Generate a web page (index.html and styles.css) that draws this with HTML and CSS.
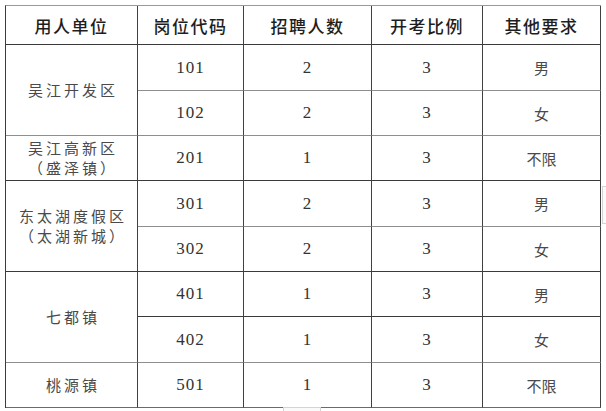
FILE: index.html
```html
<!DOCTYPE html>
<html lang="zh">
<head>
<meta charset="utf-8">
<link rel="stylesheet" href="styles.css">
</head>
<body>
<div class="page">
  <div class="grid">
    <div class="c h">用人单位</div>
    <div class="c h">岗位代码</div>
    <div class="c h">招聘人数</div>
    <div class="c h">开考比例</div>
    <div class="c h">其他要求</div>

    <div class="c unit span2 lt">吴江开发区</div>
    <div class="c num lt">101</div>
    <div class="c num lt">2</div>
    <div class="c num lt">3</div>
    <div class="c txt lt">男</div>
    <div class="c num lt">102</div>
    <div class="c num lt">2</div>
    <div class="c num lt">3</div>
    <div class="c txt lt">女</div>

    <div class="c unit two">吴江高新区<br>（盛泽镇）</div>
    <div class="c num">201</div>
    <div class="c num">1</div>
    <div class="c num">3</div>
    <div class="c txt">不限</div>

    <div class="c unit two span2">东太湖度假区<br>（太湖新城）</div>
    <div class="c num lt">301</div>
    <div class="c num lt">2</div>
    <div class="c num lt">3</div>
    <div class="c txt lt">男</div>
    <div class="c num">302</div>
    <div class="c num">2</div>
    <div class="c num">3</div>
    <div class="c txt">女</div>

    <div class="c unit span2 lt">七都镇</div>
    <div class="c num">401</div>
    <div class="c num">1</div>
    <div class="c num">3</div>
    <div class="c txt">男</div>
    <div class="c num lt">402</div>
    <div class="c num lt">1</div>
    <div class="c num lt">3</div>
    <div class="c txt lt">女</div>

    <div class="c unit md">桃源镇</div>
    <div class="c num md">501</div>
    <div class="c num md">1</div>
    <div class="c num md">3</div>
    <div class="c txt md">不限</div>
  </div>
  <div class="frag frag-right"></div>
  <div class="frag frag-bottom"></div>
</div>
</body>
</html>
```

FILE: styles.css
```css
html, body {
  margin: 0;
  padding: 0;
  background: #ffffff;
}

.page {
  position: relative;
  width: 606px;
  height: 411px;
  overflow: hidden;
  padding: 5px 0 0 5px;
  box-sizing: border-box;
}

.grid {
  display: grid;
  grid-template-columns: 132px 106px 128px 111px 118px;
  grid-template-rows: 39px 46px 45px 45px 46px 45px 45px 46px 45px;
  width: 596px;
  box-sizing: border-box;
  border-top: 1px solid #9a9a9a;
  border-left: 1px solid #3c3c3c;
}

.c {
  box-sizing: border-box;
  border-right: 1px solid #404040;
  border-bottom: 1px solid #3a3a3a;
  display: flex;
  align-items: center;
  justify-content: center;
  text-align: center;
}

.c.lt {
  border-bottom-color: #8e8e8e;
}

.c.md {
  border-bottom-color: #6a6a6a;
}

.span2 {
  grid-row: span 2;
}

.h {
  font-family: "Noto Sans CJK SC", "Noto Sans", sans-serif;
  font-size: 17px;
  font-weight: 500;
  color: #1e1e1e;
  letter-spacing: 1.5px;
  padding-top: 1px;
}

.unit {
  font-family: "Noto Sans CJK SC", "Noto Sans", sans-serif;
  font-size: 15px;
  font-weight: 400;
  color: #4a4a4a;
  letter-spacing: 3px;
  line-height: 20px;
  padding-left: 3px;
}

.txt {
  font-family: "Noto Sans CJK SC", "Noto Sans", sans-serif;
  font-size: 15px;
  color: #4a4a4a;
}

.num {
  font-family: "Liberation Serif", "Times New Roman", serif;
  font-size: 17px;
  color: #333333;
  letter-spacing: 1px;
}

.frag {
  position: absolute;
  border: 1px solid #d4d4d4;
  background: #fafafa;
}

.frag-right {
  left: 602px;
  top: 186px;
  width: 20px;
  height: 36px;
}

.frag-bottom {
  left: 283px;
  top: 407px;
  width: 36px;
  height: 20px;
}
```
